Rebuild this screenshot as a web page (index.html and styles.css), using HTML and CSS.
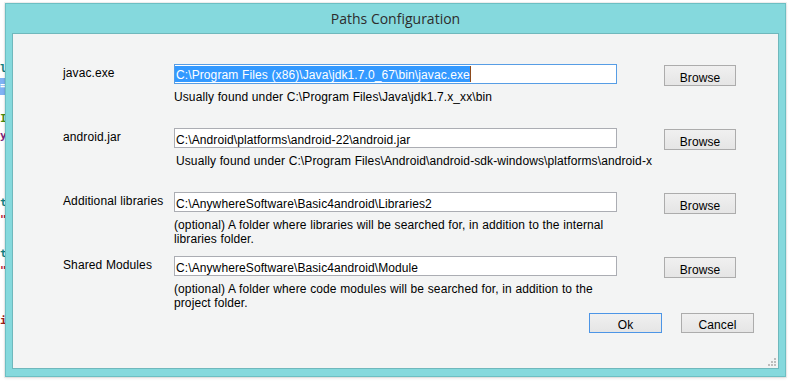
FILE: index.html
```html
<!DOCTYPE html>
<html>
<head>
<meta charset="utf-8">
<title>Paths Configuration</title>
<link rel="stylesheet" href="styles.css">
</head>
<body>
<div class="editor">
  <div class="ln"><span class="c-teal">ls.Add</span></div>
  <div class="ln hl"><span>= "&lt;"</span></div>
  <div class="ln"></div>
  <div class="ln"><span class="c-green">If x</span></div>
  <div class="ln"><span class="c-purple">y = 0</span></div>
  <div class="ln"></div>
  <div class="ln"></div>
  <div class="ln"></div>
  <div class="ln"><span class="c-teal">txt</span></div>
  <div class="ln"><span class="c-red">"str"</span></div>
  <div class="ln"></div>
  <div class="ln"><span class="c-teal">txt</span></div>
  <div class="ln"><span class="c-red">"str"</span></div>
  <div class="ln"></div>
  <div class="ln"></div>
  <div class="ln"><span class="c-dred">i = 1</span></div>
</div>

<div class="window">
  <div class="titlebar">Paths Configuration</div>
  <div class="client">
    <div class="row">
      <div class="lbl">javac.exe</div>
      <div class="field focused"><span class="sel">C:\Program Files (x86)\Java\jdk1.7.0_67\bin\javac.exe</span><span class="caret"></span></div>
      <button class="btn browse">Browse</button>
      <div class="hint">Usually found under C:\Program Files\Java\jdk1.7.x_xx\bin</div>
    </div>
    <div class="row">
      <div class="lbl">android.jar</div>
      <div class="field">C:\Android\platforms\android-22\android.jar</div>
      <button class="btn browse">Browse</button>
      <div class="hint shift">Usually found under C:\Program Files\Android\android-sdk-windows\platforms\android-x</div>
    </div>
    <div class="row">
      <div class="lbl">Additional libraries</div>
      <div class="field">C:\AnywhereSoftware\Basic4android\Libraries2</div>
      <button class="btn browse">Browse</button>
      <div class="hint">(optional) A folder where libraries will be searched for, in addition to the internal<br>libraries folder.</div>
    </div>
    <div class="row last">
      <div class="lbl">Shared Modules</div>
      <div class="field">C:\AnywhereSoftware\Basic4android\Module</div>
      <button class="btn browse">Browse</button>
      <div class="hint">(optional) A folder where code modules will be searched for, in addition to the<br>project folder.</div>
    </div>
    <div class="actions">
      <button class="btn action default">Ok</button>
      <button class="btn action">Cancel</button>
    </div>
    <svg class="grip" width="9" height="9" viewBox="0 0 9 9">
      <rect x="6" y="0" width="2" height="2" fill="#bdbdbd"/>
      <rect x="3" y="3" width="2" height="2" fill="#bdbdbd"/>
      <rect x="6" y="3" width="2" height="2" fill="#bdbdbd"/>
      <rect x="0" y="6" width="2" height="2" fill="#bdbdbd"/>
      <rect x="3" y="6" width="2" height="2" fill="#bdbdbd"/>
      <rect x="6" y="6" width="2" height="2" fill="#bdbdbd"/>
    </svg>
  </div>
</div>
</body>
</html>
```
FILE: styles.css
```css
html, body {
  margin: 0;
  padding: 0;
}
body {
  width: 793px;
  height: 383px;
  overflow: hidden;
  position: relative;
  background: #ffffff;
  font-family: "Liberation Sans", Arial, sans-serif;
  font-size: 12px;
  color: #000;
}

/* code editor behind the dialog */
.editor {
  width: 60px;
  padding-top: 61px;
  font-family: "DejaVu Sans Mono", "Liberation Mono", monospace;
  font-size: 11px;
  font-weight: bold;
}
.ln {
  height: 16.8px;
  line-height: 16.8px;
  white-space: nowrap;
}
.ln.hl {
  background: #7fb2f3;
  color: #fff;
}
.c-teal { color: #13807f; }
.c-green { color: #4a8a10; }
.c-purple { color: #7a1f7a; }
.c-red { color: #b0203c; }
.c-dred { color: #9a2020; }

/* dialog window */
.window {
  position: absolute;
  left: 5px;
  top: 3px;
  width: 781px;
  height: 374px;
  box-sizing: border-box;
  border: 1px solid #6cbfc3;
  background: #85d9dd;
  padding: 0 6px 7px 6px;
  display: flex;
  flex-direction: column;
  box-shadow: 0 0 0 1px rgba(0, 0, 0, 0.05), 0 1px 3px rgba(0, 0, 0, 0.12);
}
.titlebar {
  height: 29px;
  flex: none;
  display: flex;
  align-items: center;
  justify-content: center;
  font-family: "Open Sans", "Noto Sans", sans-serif;
  font-size: 14px;
  color: #2d2d2d;
  padding-bottom: 1px;
  box-sizing: border-box;
}
.client {
  flex: 1;
  position: relative;
  box-sizing: border-box;
  background: #f3f4f4;
  border: 1px solid #6fb8bc;
  padding: 30px 0 0 50px;
  letter-spacing: 0.1px;
  word-spacing: 0.2px;
}

.row {
  display: grid;
  grid-template-columns: 111px 443px 47px 72px;
  grid-template-rows: 20px auto;
  align-content: start;
  height: 64px;
}
.row.last {
  height: 57px;
}
.lbl {
  grid-column: 1;
  grid-row: 1;
  margin-top: 2px;
  line-height: 14px;
  white-space: nowrap;
}
.field {
  grid-column: 2;
  grid-row: 1;
  box-sizing: border-box;
  height: 20px;
  border: 1px solid #abadb3;
  background: #fff;
  padding: 4px 2px 0 1px;
  line-height: 14px;
  white-space: nowrap;
  overflow: hidden;
}
.field.focused {
  border-color: #569de5;
  padding: 1px 0 0 0;
}
.sel {
  display: inline-block;
  vertical-align: top;
  height: 14px;
  padding: 2px 0 0 1px;
  line-height: 14px;
  background: #3399ff;
  color: #fff;
}
.caret {
  display: inline-block;
  vertical-align: top;
  width: 1px;
  height: 16px;
  background: #8c4a1c;
}
.hint {
  grid-column: 2 / 5;
  grid-row: 2;
  margin-top: 6px;
  line-height: 14px;
  white-space: nowrap;
}
.hint.shift {
  margin-left: 2px;
}

.btn {
  box-sizing: border-box;
  border: 1px solid #acacac;
  background: linear-gradient(#f0f0f0, #e5e5e5);
  font-family: "Liberation Sans", Arial, sans-serif;
  font-size: 12px;
  letter-spacing: 0.1px;
  color: #000;
  padding: 4px 0 0 0;
  line-height: 14px;
  text-align: center;
  margin: 0;
  display: block;
}
.browse {
  grid-column: 4;
  grid-row: 1;
  height: 21px;
  margin-top: 1px;
}
.actions {
  display: flex;
  justify-content: flex-end;
  gap: 19px;
  padding-right: 24px;
}
.action {
  width: 73px;
  height: 20px;
  padding-top: 3px;
}
.action.default {
  border-color: #4c95e6;
}
.grip {
  position: absolute;
  right: 1px;
  bottom: 1px;
}
```
